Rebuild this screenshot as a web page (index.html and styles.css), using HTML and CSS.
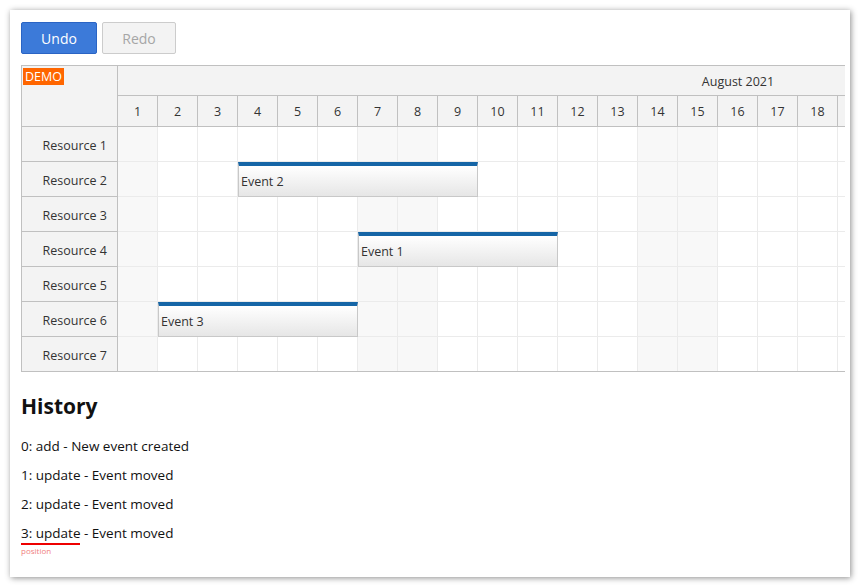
FILE: index.html
```html
<!DOCTYPE html>
<html>
<head>
<meta charset="utf-8">
<link rel="stylesheet" href="styles.css">
</head>
<body>
<div class="frame">
  <div class="toolbar">
    <button class="btn btn-primary">Undo</button>
    <button class="btn btn-disabled">Redo</button>
  </div>
  <div class="scheduler">
    <div class="rowheaders">
      <div class="corner"><span class="demo">DEMO</span></div>
      <div class="rh">Resource 1</div>
      <div class="rh">Resource 2</div>
      <div class="rh">Resource 3</div>
      <div class="rh">Resource 4</div>
      <div class="rh">Resource 5</div>
      <div class="rh">Resource 6</div>
      <div class="rh">Resource 7</div>
    </div>
    <div class="viewport">
      <div class="timeline">
        <div class="month">August 2021</div>
        <div class="days">
          <div class="day">1</div><div class="day">2</div><div class="day">3</div><div class="day">4</div><div class="day">5</div><div class="day">6</div><div class="day">7</div><div class="day">8</div><div class="day">9</div><div class="day">10</div><div class="day">11</div><div class="day">12</div><div class="day">13</div><div class="day">14</div><div class="day">15</div><div class="day">16</div><div class="day">17</div><div class="day">18</div><div class="day"></div>
        </div>
        <div class="grid">
          <div class="col we c1"></div><div class="col c2"></div><div class="col c3"></div><div class="col c4"></div><div class="col c5"></div><div class="col c6"></div><div class="col we c7"></div><div class="col we c8"></div><div class="col c9"></div><div class="col c10"></div><div class="col c11"></div><div class="col c12"></div><div class="col c13"></div><div class="col we c14"></div><div class="col we c15"></div><div class="col c16"></div><div class="col c17"></div><div class="col c18"></div><div class="col c19"></div>
          <div class="row r1"></div><div class="row r2"></div><div class="row r3"></div><div class="row r4"></div><div class="row r5"></div><div class="row r6"></div><div class="row r7"></div>
          <div class="event ev2">Event 2</div>
          <div class="event ev1">Event 1</div>
          <div class="event ev3">Event 3</div>
        </div>
      </div>
    </div>
  </div>
  <div class="history">
    <h2 class="history-title">History</h2>
    <div class="entry">0: add - New event created</div>
    <div class="entry">1: update - Event moved</div>
    <div class="entry">2: update - Event moved</div>
    <div class="entry"><span class="current">3: update<span class="tag">position</span></span> - Event moved</div>
  </div>
</div>
</body>
</html>
```

FILE: styles.css
```css
* { box-sizing: border-box; }
html, body { margin: 0; padding: 0; background: #fff; }
body {
  font-family: "Open Sans", "Noto Sans", sans-serif;
  color: #333;
}
.frame {
  margin: 10px;
  width: 840px;
  height: 567px;
  background: #fff;
  box-shadow: 1px 1px 6px rgba(0, 0, 0, 0.45);
  padding: 12px 5px 0 11px;
  overflow: hidden;
}
.toolbar {
  display: flex;
  gap: 5px;
  margin-bottom: 11px;
}
.btn {
  height: 32px;
  font-family: inherit;
  font-size: 14px;
  border-radius: 2px;
  padding: 0;
}
.btn-primary {
  width: 76px;
  background: #3c7ad9;
  border: 1px solid #2a64c4;
  color: #fff;
}
.btn-disabled {
  width: 74px;
  background: #f3f3f3;
  border: 1px solid #cccccc;
  color: #a6a6a6;
}
.scheduler {
  display: flex;
  width: 824px;
  border-top: 1px solid #c0c0c0;
  border-left: 1px solid #c0c0c0;
  border-bottom: 1px solid #c0c0c0;
  font-size: 12.5px;
  color: #333;
}
.rowheaders {
  width: 96px;
  flex: none;
  background: #f3f3f3;
  border-right: 1px solid #c0c0c0;
}
.corner {
  height: 61px;
  border-bottom: 1px solid #c0c0c0;
  padding: 2px 0 0 1px;
}
.demo {
  display: inline-block;
  background: #ff6600;
  color: #fff;
  font-size: 12.5px;
  line-height: 17px;
  padding: 0 2px;
}
.rh {
  height: 35px;
  border-bottom: 1px solid #c0c0c0;
  display: flex;
  align-items: center;
  justify-content: flex-end;
  padding: 2px 10px 0 0;
}
.rh:last-child { border-bottom: none; height: 34px; }
.viewport {
  flex: 1;
  overflow: hidden;
}
.timeline { width: 1240px; }
.month {
  height: 30px;
  background: #f3f3f3;
  border-bottom: 1px solid #c0c0c0;
  display: flex;
  align-items: center;
  justify-content: center;
  padding-top: 1px;
}
.days {
  display: flex;
  height: 31px;
  background: #f3f3f3;
  border-bottom: 1px solid #c0c0c0;
}
.day {
  width: 40px;
  flex: none;
  border-right: 1px solid #c0c0c0;
  display: flex;
  align-items: center;
  justify-content: center;
}
.grid {
  display: grid;
  grid-template-columns: repeat(19, 40px);
  grid-template-rows: repeat(6, 35px) 34px;
}
.col {
  grid-row: 1 / -1;
  border-right: 1px solid #ebebeb;
  background: #fff;
}
.col.we { background: #f8f8f8; }
.c1 { grid-column: 1; } .c2 { grid-column: 2; } .c3 { grid-column: 3; } .c4 { grid-column: 4; }
.c5 { grid-column: 5; } .c6 { grid-column: 6; } .c7 { grid-column: 7; } .c8 { grid-column: 8; }
.c9 { grid-column: 9; } .c10 { grid-column: 10; } .c11 { grid-column: 11; } .c12 { grid-column: 12; }
.c13 { grid-column: 13; } .c14 { grid-column: 14; } .c15 { grid-column: 15; } .c16 { grid-column: 16; }
.c17 { grid-column: 17; } .c18 { grid-column: 18; } .c19 { grid-column: 19; }
.row {
  grid-column: 1 / -1;
  border-bottom: 1px solid #ebebeb;
}
.r1 { grid-row: 1; } .r2 { grid-row: 2; } .r3 { grid-row: 3; } .r4 { grid-row: 4; }
.r5 { grid-row: 5; } .r6 { grid-row: 6; } .r7 { grid-row: 7; border-bottom: none; }
.event {
  border: 1px solid #c8c8c8;
  border-top: 4px solid #1565a6;
  background: linear-gradient(#ffffff, #e6e6e6);
  display: flex;
  align-items: center;
  padding: 0 0 0 2px;
  color: #333;
}
.ev2 { grid-column: 4 / span 6; grid-row: 2; }
.ev1 { grid-column: 7 / span 5; grid-row: 4; }
.ev3 { grid-column: 2 / span 5; grid-row: 6; }
.history { color: #111; }
.history-title {
  margin: 19px 0 15px;
  font-size: 21px;
  line-height: 30px;
  font-weight: bold;
}
.entry {
  font-size: 13.5px;
  line-height: 20px;
  margin-bottom: 9px;
}
.current {
  position: relative;
  display: inline-block;
  line-height: 19px;
  border-bottom: 2px solid #ee0000;
}
.tag {
  position: absolute;
  left: 0;
  top: 22px;
  font-size: 8px;
  line-height: 10px;
  color: #f08080;
}
```
